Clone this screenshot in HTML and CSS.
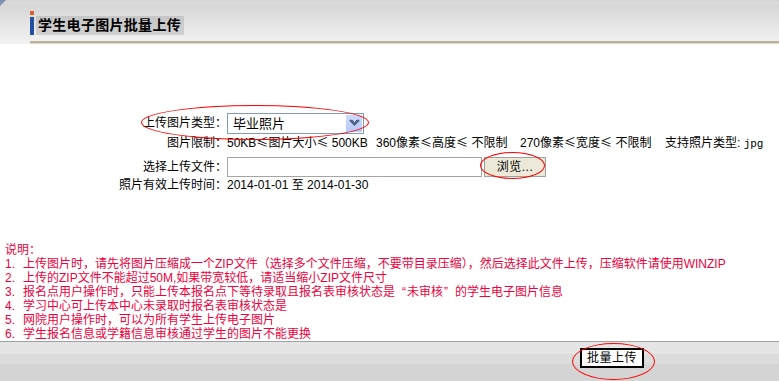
FILE: index.html
```html
<!DOCTYPE html>
<html lang="zh">
<head>
<meta charset="utf-8">
<title>学生电子图片批量上传</title>
<link rel="stylesheet" href="styles.css">
</head>
<body>
<div class="page">
  <div class="header">
    <span class="corner"></span>
    <div class="title-wrap">
      <div class="marks"><span class="mark-orange"></span><span class="mark-blue"></span></div>
      <div class="title">学生电子图片批量上传</div>
    </div>
    <div class="rule"></div>
  </div>

  <div class="form">
    <div class="row r1">
      <div class="label">上传图片类型：</div>
      <div class="value">
        <div class="select"><span class="sel-text">毕业照片</span><span class="sel-btn"><svg width="11" height="8" viewBox="0 0 11 8"><path d="M1 1 L5.5 5.5 L10 1" fill="none" stroke="#4d6185" stroke-width="2.2"/><path d="M3 1 L5.5 3.5 L8 1" fill="none" stroke="#4d6185" stroke-width="1"/></svg></span></div>
      </div>
    </div>
    <div class="row r2">
      <div class="label">图片限制：</div>
      <div class="value limits"><span class="lim l1">50KB<span class="le">≤</span>图片大小<span class="le">≤</span> 500KB</span><span class="lim l2">360像素<span class="le">≤</span>高度<span class="le">≤</span> 不限制</span><span class="lim l3">270像素<span class="le">≤</span>宽度<span class="le">≤</span> 不限制</span><span class="lim l4">支持照片类型: <span class="mono">jpg</span></span></div>
    </div>
    <div class="row r3">
      <div class="label">选择上传文件：</div>
      <div class="value file"><span class="file-box"></span><span class="browse">浏览...</span></div>
    </div>
    <div class="row r4">
      <div class="label">照片有效上传时间：</div>
      <div class="value">2014-01-01 至 2014-01-30</div>
    </div>
  </div>

  <div class="notes">
    <div class="note-line">说明：</div>
    <div class="note-line"><span class="num">1.</span>上传图片时，请先将图片压缩成一个ZIP文件（选择多个文件压缩，不要带目录压缩），然后选择此文件上传，压缩软件请使用WINZIP</div>
    <div class="note-line"><span class="num">2.</span>上传的ZIP文件不能超过50M,如果带宽较低，请适当缩小ZIP文件尺寸</div>
    <div class="note-line"><span class="num">3.</span>报名点用户操作时，只能上传本报名点下等待录取且报名表审核状态是<span class="lq">“</span>未审核<span class="rq">”</span>的学生电子图片信息</div>
    <div class="note-line"><span class="num">4.</span>学习中心可上传本中心未录取时报名表审核状态是</div>
    <div class="note-line"><span class="num">5.</span>网院用户操作时，可以为所有学生上传电子图片</div>
    <div class="note-line"><span class="num">6.</span>学生报名信息或学籍信息审核通过学生的图片不能更换</div>
  </div>

  <div class="footer">
    <span class="submit">批量上传</span>
  </div>

  <span class="ellipse e1"></span>
  <span class="ellipse e2"></span>
  <span class="ellipse e3"></span>
</div>
</body>
</html>
```

FILE: styles.css
```css
html, body {
  margin: 0;
  padding: 0;
  background: #ffffff;
}
body {
  font-family: "Liberation Sans", "Noto Sans CJK SC", sans-serif;
  font-size: 12px;
  color: #000;
}
.page {
  position: relative;
  width: 779px;
  height: 381px;
  display: flex;
  flex-direction: column;
  overflow: hidden;
}
.header {
  position: relative;
  height: 44px;
  background: linear-gradient(#d2d2d2 0px, #dcdcdc 3px, #d6d6d6 5px, #e2e2e2 20px, #f0f0f0 40px, #f2f2f2 44px);
  flex: none;
}
.corner {
  position: absolute;
  left: 0;
  top: 0;
  width: 0;
  height: 0;
  border-top: 6px solid #8090b0;
  border-right: 6px solid transparent;
}
.title-wrap {
  display: flex;
  padding: 11px 0 0 30px;
  height: 24px;
}
.marks {
  display: flex;
  flex-direction: column;
  gap: 2px;
  width: 4px;
}
.mark-orange {
  display: block;
  width: 4px;
  height: 4px;
  background: #e0622a;
}
.mark-blue {
  display: block;
  width: 4px;
  height: 18px;
  background: #2450a0;
}
.title {
  margin: 5px 0 0 2px;
  height: 19px;
  padding: 0 3px 0 2px;
  background: linear-gradient(#c6c6c6, #d0d0d0);
  font-size: 14px;
  font-weight: bold;
  line-height: 19px;
  letter-spacing: 0.3px;
}
.rule {
  position: absolute;
  left: 30px;
  right: 0;
  top: 41px;
  height: 2px;
  background: #b9b29e;
  border-bottom: 1px solid #ddd8c8;
}
.form {
  padding-top: 68px;
  display: flex;
  flex-direction: column;
}
.row {
  display: flex;
  align-items: center;
}
.label {
  width: 227px;
  text-align: right;
  flex: none;
  line-height: 14px;
}
.value {
  line-height: 14px;
  white-space: nowrap;
}
.r1 { height: 22px; }
.r2 { height: 18px; }
.r3 { height: 20px; margin-top: 5px; }
.r4 { height: 14px; margin-top: 1px; }
.select {
  display: flex;
  width: 135px;
  height: 19px;
  border: 1px solid #7f9db9;
  background: #fff;
  box-sizing: content-box;
}
.sel-text {
  flex: 1;
  padding-left: 5px;
  font-size: 13px;
  line-height: 19px;
}
.sel-btn {
  width: 16px;
  height: 17px;
  margin: 1px 1px 1px 0;
  background: linear-gradient(#cddbfc, #b6c9f6);
  display: flex;
  align-items: center;
  justify-content: center;
}
.limits .lim { display: inline-block; }
.le { font-family: "Noto Sans CJK SC", sans-serif; }
.l1 { width: 149px; }
.l2 { width: 144px; }
.l3 { width: 145px; }
.mono { font-family: "Liberation Mono", monospace; font-size: 11px; }
.file {
  display: flex;
  align-items: center;
}
.file-box {
  display: block;
  width: 253px;
  height: 18px;
  border: 1px solid #a5a5a5;
  background: #fff;
}
.browse {
  display: block;
  margin-left: 2px;
  width: 60px;
  height: 18px;
  border: 1px solid #a0a0a0;
  background: #ece9d8;
  text-align: center;
  line-height: 18px;
  letter-spacing: 0.5px;
}
.notes {
  margin-top: 51px;
  padding-left: 5px;
  color: #f0003c;
  white-space: nowrap;
}
.note-line {
  height: 14px;
  line-height: 14px;
}
.num {
  display: inline-block;
  width: 18px;
}
.lq, .rq {
  display: inline-block;
  width: 11px;
}
.lq { text-align: right; padding-right: 1px; }
.rq { text-align: left; padding-left: 1px; }
.footer {
  margin-top: auto;
  height: 33px;
  border-top: 1px solid #a0a0a0;
  background: linear-gradient(#e5e5e5 0px, #e5e5e5 12px, #dcdcdc 12px, #dcdcdc 22px, #d4d4d4 22px);
  padding: 6px 0 0 580px;
  box-sizing: content-box;
  flex: none;
}
.submit {
  display: block;
  width: 60px;
  height: 16px;
  border: 2px solid #000;
  background: #fff;
  font-size: 12px;
  line-height: 16px;
  text-align: center;
  letter-spacing: 0.5px;
}
.ellipse {
  position: absolute;
  border: 1px solid #ff0000;
  border-radius: 50%;
  box-sizing: border-box;
}
.e1 { left: 141px; top: 105px; width: 228px; height: 35px; }
.e2 { left: 480px; top: 152px; width: 65px; height: 27px; }
.e3 { left: 572px; top: 343px; width: 83px; height: 37px; }
```
